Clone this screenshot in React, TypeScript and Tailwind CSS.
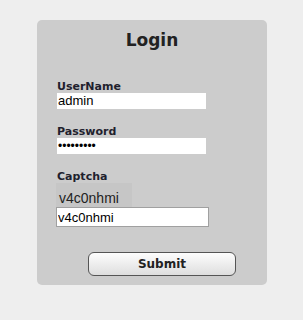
export default function App() {
  return (
    <div className="w-full h-[320px] bg-[#eeeeee] pt-[20px] pl-[37px] font-['Liberation_Sans',Arial,sans-serif]">
      {/* LOGIN PANEL */}
      <div className="w-[230px] h-[265px] bg-[#cccccc] rounded-[5px] pt-[10px] pl-[19px]">
        <h1 className="pr-[19px] text-center text-[17px] leading-[20px] font-bold text-[#222] font-['DejaVu_Sans',Verdana,sans-serif]">
          Login
        </h1>

        {/* USERNAME */}
        <label className="block mt-[31px] ml-[1px] h-[12px] text-[11px] leading-[12px] font-bold text-[#1f1f2e] font-['DejaVu_Sans',Verdana,sans-serif]">
          UserName
        </label>
        <input
          type="text"
          defaultValue="admin"
          className="block ml-[1px] w-[149px] h-[16px] bg-white px-[1px] text-[13px] leading-[16px] text-black outline-none"
        />

        {/* PASSWORD */}
        <label className="block mt-[17px] ml-[1px] h-[12px] text-[11px] leading-[12px] font-bold text-[#1f1f2e] font-['DejaVu_Sans',Verdana,sans-serif]">
          Password
        </label>
        <input
          type="password"
          defaultValue="123456789"
          className="block ml-[1px] w-[149px] h-[16px] bg-white px-[1px] text-[12px] leading-[16px] text-black outline-none"
        />

        {/* CAPTCHA */}
        <label className="block mt-[17px] ml-[1px] h-[12px] text-[11px] leading-[12px] font-bold text-[#1f1f2e] font-['DejaVu_Sans',Verdana,sans-serif]">
          Captcha
        </label>
        <div className="w-[76px] h-[24px] bg-[#c6c6c6] pl-[3px] pt-[7px] text-[14px] leading-[16px] text-[#222]">
          v4c0nhmi
        </div>
        <input
          type="text"
          defaultValue="v4c0nhmi"
          className="block w-[153px] h-[20px] bg-white border border-[#a0a0a0] px-[1px] text-[13px] leading-[18px] text-black outline-none"
        />

        {/* SUBMIT */}
        <button className="block mt-[25px] ml-[32px] w-[148px] h-[24px] rounded-[6px] border border-[#555] bg-gradient-to-b from-[#fdfdfd] to-[#dedede] text-[12px] font-bold text-[#222] font-['DejaVu_Sans',Verdana,sans-serif]">
          Submit
        </button>
      </div>
    </div>
  );
}
